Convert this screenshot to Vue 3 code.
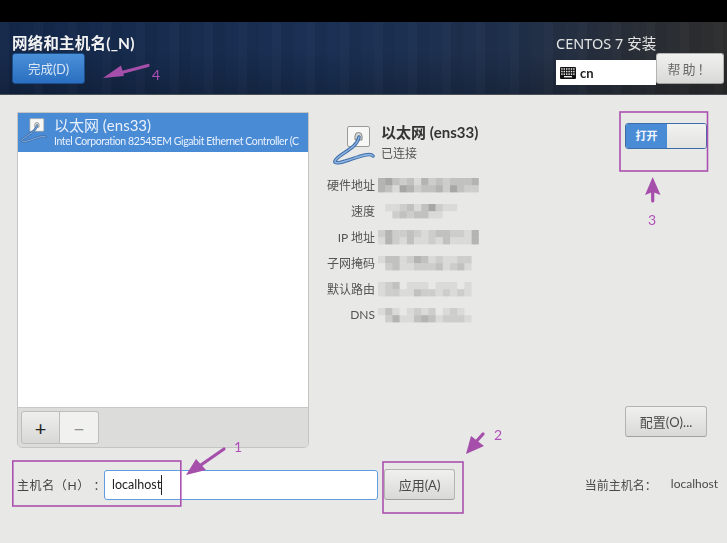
<template>
  <div class="page">
    <div class="topbar"></div>
    <header class="header">
      <div class="header-left">
        <h1>网络和主机名(_N)</h1>
        <button class="btn-done">完成(D)</button>
      </div>
      <div class="header-right">
        <div class="product">CENTOS 7 安装</div>
        <div class="header-tools">
          <div class="layout-box">
            <svg class="kbd" viewBox="0 0 16 12" width="16" height="12">
              <rect width="16" height="12" rx="1" fill="#111" />
              <g fill="#eee">
                <rect v-for="k in keys" :key="k.id" :x="k.x" :y="k.y" width="1.4" height="1.5" />
                <rect x="4" y="9" width="8" height="1.4" />
              </g>
            </svg>
            <span>cn</span>
          </div>
          <button class="btn btn-help">帮助！</button>
        </div>
      </div>
    </header>

    <main class="content">
      <div class="top-row">
        <section class="list-panel">
          <div class="list">
            <div class="list-row">
              <svg class="nic-icon small" viewBox="0 0 44 42">
                <use href="#nic" />
              </svg>
              <div class="list-text">
                <div class="list-title">以太网 (ens33)</div>
                <div class="list-sub">Intel Corporation 82545EM Gigabit Ethernet Controller (C</div>
              </div>
            </div>
          </div>
          <div class="list-tools">
            <button class="tool tool-add">+</button>
            <button class="tool tool-remove">−</button>
          </div>
        </section>

        <section class="details">
          <div class="details-top">
            <svg class="nic-icon" viewBox="0 0 44 42">
              <defs>
                <g id="nic">
                  <rect x="15.5" y="1.5" width="22" height="20" rx="1.5" fill="#f7f7f6" stroke="#9a9a98" />
                  <path d="M23 11a3.5 3.5 0 0 1 7 0v4h-7z" fill="#d8d8d6" stroke="#858583" />
                  <path d="M27 12C25 24 6 29 3 36C2 39 8 38 17 35C26 32 38 27 41 31" fill="none" stroke="#3f6ea8" stroke-width="3.500" stroke-linecap="round" />
                  <path d="M27 12C25 24 6 29 3 36C2 39 8 38 17 35C26 32 38 27 41 31" fill="none" stroke="#8fb5e2" stroke-width="1.400" stroke-linecap="round" />
                </g>
              </defs>
              <use href="#nic" />
            </svg>
            <div class="details-head">
              <div class="details-title">以太网 (ens33)</div>
              <div class="details-state">已连接</div>
            </div>
            <div class="switch">
              <span class="switch-on">打开</span>
              <span class="switch-knob"></span>
            </div>
          </div>

          <div class="props">
            <template v-for="p in props" :key="p.label">
              <div class="prop-label">{{ p.label }}</div>
              <svg class="mosaic" viewBox="0 0 105 15" width="105" height="15">
                <template v-for="(row, r) in p.cells" :key="r">
                  <rect
                    v-for="(c, i) in row"
                    :key="i"
                    :x="i * 7.2"
                    :y="r * 7.2"
                    width="7.2"
                    height="7.2"
                    fill="#666"
                    :fill-opacity="Number(c) / 10"
                  />
                </template>
              </svg>
            </template>
          </div>

          <div class="config-row">
            <button class="btn btn-config">配置(O)...</button>
          </div>
        </section>
      </div>

      <div class="host-row">
        <label class="host-label">主机名（H） ：</label>
        <div class="host-input"><span class="caret">localhost</span></div>
        <button class="btn btn-apply">应用(A)</button>
        <div class="current-host">
          <span class="current-label">当前主机名：</span>
          <span>localhost</span>
        </div>
      </div>
    </main>

    <!-- purple marks drawn on top of the screenshot -->
    <svg class="marks" width="727" height="543" viewBox="0 0 727 543">
      <g fill="none" stroke="#aa50b0" stroke-width="1.6">
        <rect x="12.8" y="461" width="168" height="45" />
        <rect x="383" y="462" width="80" height="51" />
        <rect x="620" y="112" width="87.5" height="59" />
      </g>
      <g stroke="#a54fab" stroke-width="3.2" stroke-linecap="round">
        <line x1="148" y1="65.500" x2="118" y2="73.500" />
        <line x1="224" y1="449" x2="198" y2="467" />
        <line x1="483" y1="434" x2="474" y2="444" />
        <line x1="652.700" y1="190" x2="652.700" y2="201" />
      </g>
      <g fill="#a54fab">
        <polygon points="103,78 121,65.500 124,76" />
        <polygon points="186,475 196,459 206,470" />
        <polygon points="466,454 471,436 484,446" />
        <polygon points="652.700,177 660.500,195 652.700,192 645,195" />
      </g>
    </svg>
    <span class="mark-num" style="left: 152px; top: 66px">4</span>
    <span class="mark-num" style="left: 234px; top: 438px">1</span>
    <span class="mark-num" style="left: 494px; top: 426px">2</span>
    <span class="mark-num" style="left: 648px; top: 211px">3</span>
  </div>
</template>

<script setup>
const keys = []
for (let y = 0; y < 3; y++) {
  for (let x = 0; x < 6; x++) {
    keys.push({ id: y + '-' + x, x: 1.2 + x * 2.4, y: 1.2 + y * 2.6 })
  }
}

// blurred-out values from the screenshot, one digit per mosaic cell
const props = [
  { label: '硬件地址', cells: ['45323142323334', '43154233425322'] },
  { label: '速度', cells: ['01123135211000', '00232331100000'] },
  { label: 'IP 地址', cells: ['24223212332214', '14213112131114'] },
  { label: '子网掩码', cells: ['13312431211220', '02311222312310'] },
  { label: '默认路由', cells: ['12301110111010', '12211322121210'] },
  { label: 'DNS', cells: ['13101212012100', '02411343122210'] },
]
</script>

<style scoped>
.page {
  position: relative;
  width: 727px;
  height: 543px;
  overflow: hidden;
  background: #e8e8e7;
  color: #3a3a3a;
  font-family: Lato, "Noto Sans CJK SC", sans-serif;
  font-size: 12px;
}

.topbar {
  height: 22px;
  background: #000;
}

.header {
  display: flex;
  justify-content: space-between;
  height: 73px;
  padding: 0 3px 0 12px;
  box-sizing: border-box;
  border-bottom: 1px solid #4a4f57;
  background:
    repeating-linear-gradient(90deg, rgba(255, 255, 255, 0.015) 0 9px, rgba(0, 0, 0, 0.04) 9px 21px, rgba(255, 255, 255, 0) 21px 34px),
    linear-gradient(180deg, rgba(0, 0, 0, 0) 40%, rgba(0, 0, 0, 0.2) 100%),
    linear-gradient(90deg, #14284a 0%, #1a3054 45%, #1f304c 70%, #2a2f37 88%, #2e2e2e 100%);
}

.header-left,
.header-right,
.content {
  filter: blur(0.35px);
}

.header-left h1 {
  margin: 12px 0 0;
  color: #f2f2f2;
  font-size: 15.500px;
  line-height: 18px;
  font-weight: 700;
  letter-spacing: 0.2px;
}

.btn-done {
  display: block;
  width: 73px;
  height: 31px;
  margin-top: 1px;
  padding: 0;
  border: 1px solid #1c4f8a;
  border-radius: 3px;
  background: linear-gradient(180deg, #4a90d9, #2a6fc0);
  color: #dbe7f5;
  font: inherit;
  font-size: 12.500px;
}

.header-right {
  width: 168px;
}

.product {
  margin-top: 12px;
  color: #e4e4e4;
  font-family: "Noto Sans", "Noto Sans CJK SC", sans-serif;
  font-size: 14.500px;
  line-height: 18px;
}

.header-tools {
  display: flex;
  align-items: flex-start;
  margin-top: 1px;
}

.layout-box {
  display: flex;
  align-items: center;
  gap: 4px;
  width: 100px;
  height: 25px;
  margin-top: 7px;
  padding-left: 4px;
  box-sizing: border-box;
  background: #fff;
  color: #222;
  font-size: 13px;
  font-weight: 700;
}

.btn {
  padding: 0;
  border: 1px solid #b4b4b2;
  border-bottom-color: #a0a09e;
  border-radius: 3px;
  background: linear-gradient(180deg, #f0f0ef, #d9d9d7);
  color: #4a4a4a;
  font: inherit;
  font-size: 13px;
}

.btn-help {
  width: 68px;
  height: 31px;
  letter-spacing: 2px;
  color: #6a6a6a;
}

.content {
  padding: 17px 20px 0 17px;
}

.top-row {
  display: flex;
  height: 336px;
}

.list-panel {
  display: flex;
  flex-direction: column;
  width: 292px;
  box-sizing: border-box;
  border: 1px solid #c4c4c2;
  border-radius: 0 0 5px 5px;
  overflow: hidden;
}

.list {
  flex: 1;
  background: #fff;
  min-height: 0;
}

.list-row {
  display: flex;
  gap: 6px;
  height: 39px;
  padding: 4px 0 0 2px;
  box-sizing: border-box;
  background: #4a8bd6;
  color: #e8f1fb;
  overflow: hidden;
}

.nic-icon {
  flex: none;
  width: 44px;
  height: 42px;
  margin: 0 5px 0 7px;
}

.nic-icon.small {
  width: 28px;
  height: 28px;
  margin: 0;
}

.list-text {
  min-width: 0;
  margin-top: -1px;
}

.list-title {
  font-size: 15px;
  line-height: 19px;
  white-space: nowrap;
}

.list-sub {
  font-size: 10.500px;
  letter-spacing: -0.4px;
  line-height: 13px;
  white-space: nowrap;
}

.list-tools {
  display: flex;
  flex: none;
  height: 40px;
  padding: 3px;
  box-sizing: border-box;
  background: #dcdcdb;
  border-top: 1px solid #c8c8c6;
}

.tool {
  width: 39px;
  height: 33px;
  padding: 0;
  border: 1px solid #bdbdbb;
  background: linear-gradient(180deg, #efefee, #d8d8d6);
  color: #222;
  font: inherit;
  font-size: 20px;
  line-height: 1;
}

.tool-add {
  border-radius: 3px 0 0 3px;
}

.tool-remove {
  border-left: 0;
  border-radius: 0 3px 3px 0;
  background: #f1f1f0;
  color: #8f8f8f;
}

.details {
  display: flex;
  flex: 1;
  flex-direction: column;
  min-width: 0;
  padding-left: 16px;
  padding-bottom: 11px;
}

.details-top {
  display: flex;
  align-items: flex-start;
  padding-top: 13px;
}

.details-head {
  flex: 1;
}

.details-title {
  color: #333;
  font-size: 15px;
  font-weight: 700;
  line-height: 18px;
  margin-top: -2px;
}

.details-state {
  color: #555;
  font-size: 12px;
  line-height: 18px;
  margin-top: 4px;
}

.switch {
  display: flex;
  width: 82px;
  height: 26px;
  margin-top: -2px;
  border: 1px solid #3b6da6;
  border-radius: 3px;
  box-sizing: border-box;
  overflow: hidden;
}

.switch-on {
  width: 41px;
  background: #4a8bd6;
  color: #f2f6fb;
  font-size: 11px;
  font-weight: 700;
  line-height: 24px;
  text-align: center;
}

.switch-knob {
  flex: 1;
  background: linear-gradient(180deg, #f2f2f1, #e2e2e0);
}

.props {
  display: grid;
  grid-template-columns: 50px 105px;
  grid-auto-rows: 26px;
  column-gap: 3px;
  align-items: center;
  margin-top: 5px;
}

.prop-label {
  margin-top: -2px;
  color: #555;
  font-size: 12px;
  text-align: right;
  white-space: nowrap;
}

.mosaic {
  display: block;
  filter: blur(0.7px);
}

.config-row {
  display: flex;
  justify-content: flex-end;
  margin-top: auto;
}

.btn-config {
  width: 82px;
  height: 31px;
}

.host-row {
  display: flex;
  align-items: center;
  margin-top: 21px;
  height: 31px;
}

.host-label {
  width: 87px;
  flex: none;
  color: #444;
  font-size: 12px;
  letter-spacing: 0.6px;
  white-space: nowrap;
}

.host-input {
  display: flex;
  align-items: center;
  width: 274px;
  height: 30px;
  padding-left: 7px;
  box-sizing: border-box;
  border: 1.5px solid #5d9de0;
  border-radius: 3px;
  background: #fff;
  color: #222;
  font-size: 12.500px;
}

.caret {
  border-right: 1px solid #222;
  line-height: 20px;
}

.btn-apply {
  flex: none;
  width: 71px;
  height: 31px;
  margin-left: 6px;
}

.current-host {
  display: flex;
  margin-left: auto;
  margin-right: -11px;
  color: #4a4a4a;
  font-size: 12px;
  white-space: nowrap;
}

.current-label {
  width: 86px;
}

.marks {
  position: absolute;
  top: 0;
  left: 0;
  pointer-events: none;
}

.mark-num {
  position: absolute;
  color: #b050b8;
  font-size: 14px;
  line-height: 18px;
}
</style>

<style>
html,
body {
  margin: 0;
  background: #e8e8e7;
}
</style>
